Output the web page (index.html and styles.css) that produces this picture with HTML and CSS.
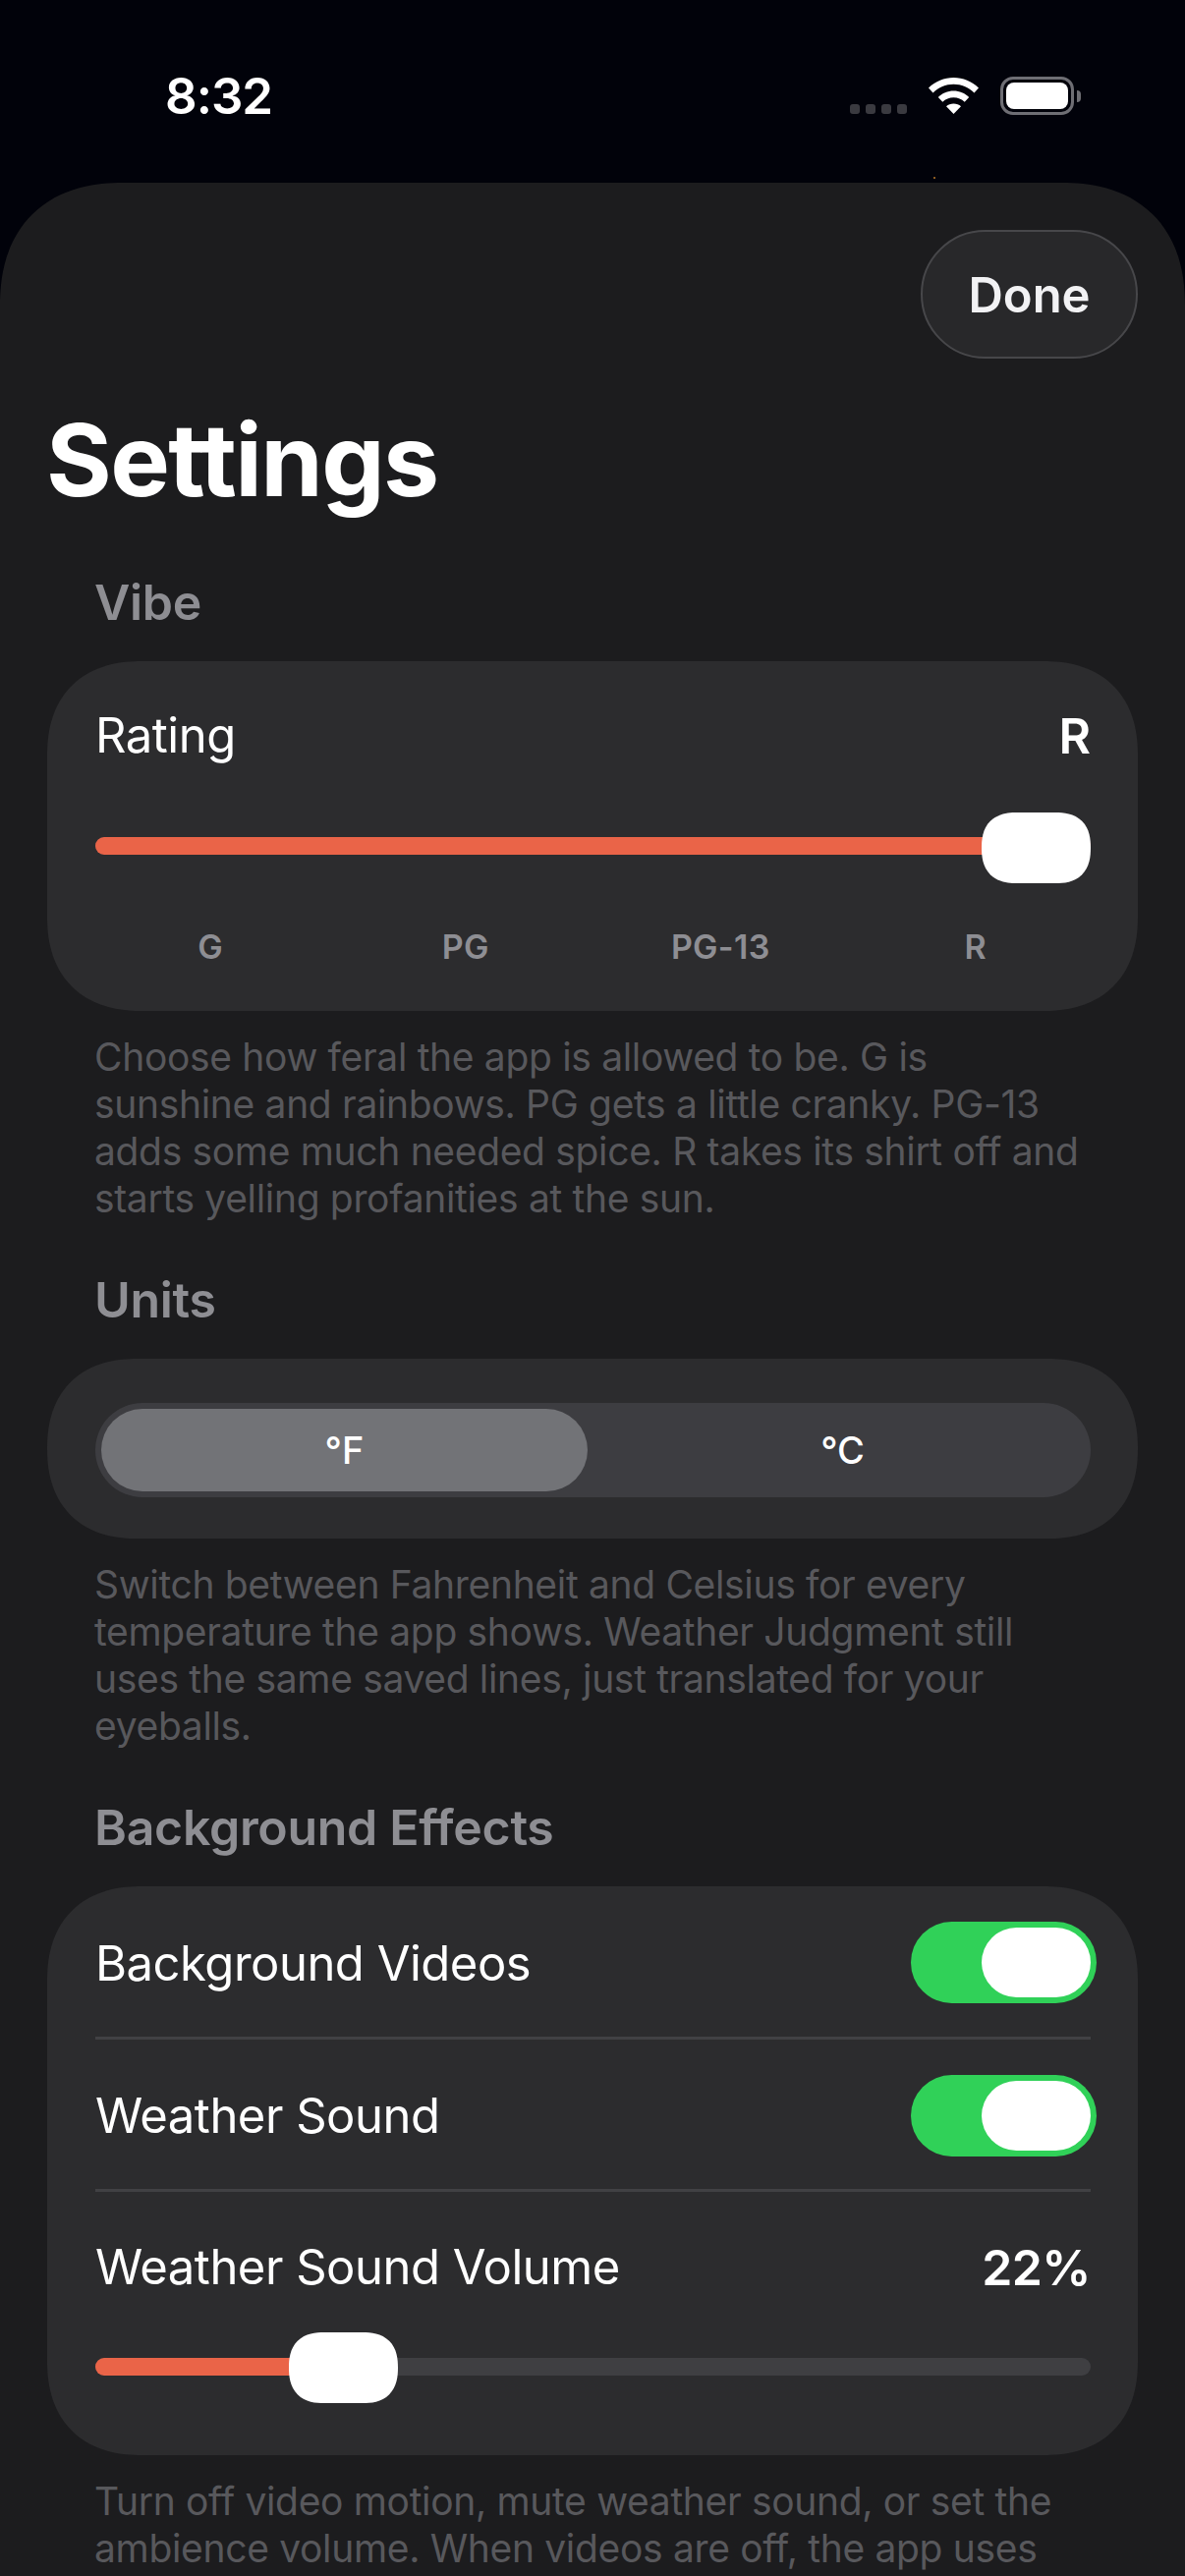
FILE: index.html
```html
<!DOCTYPE html>
<html lang="en">
<head>
<meta charset="utf-8">
<title>Settings</title>
<link rel="stylesheet" href="styles.css">
</head>
<body>
<div class="screen">
  <header class="status">
    <span class="time">8:32</span>
    <div class="status-icons">
      <div class="signal"><i></i><i></i><i></i><i></i></div>
      <svg class="wifi" viewBox="0 0 51 37" width="51" height="37" aria-hidden="true">
        <path fill="#fff" d="M25.5 0C35 0 44 3.800 51 10.500L46.500 15.500C40.800 10 33.400 6.800 25.500 6.800S10.200 10 4.500 15.500L0 10.500C7 3.800 16 0 25.500 0Z"/>
        <path fill="#fff" d="M25.500 13.500C31.500 13.500 37 15.900 41.200 19.900L36.700 24.800C33.700 22 29.800 20.300 25.500 20.300S17.300 22 14.300 24.800L9.800 19.900C14 15.900 19.500 13.500 25.500 13.500Z"/>
        <path fill="#fff" d="M25.500 26.500C28.500 26.500 31 27.500 33 29.300L25.500 37L18 29.300C20 27.500 22.500 26.500 25.500 26.500Z"/>
      </svg>
      <div class="battery"><div class="battery-fill"></div></div>
      <div class="battery-nub"></div>
    </div>
  </header>
  <i class="speck"></i>
  <main class="sheet">
    <div class="top-row"><button class="done">Done</button></div>
    <h1 class="title">Settings</h1>

    <h2 class="section-label">Vibe</h2>
    <section class="card card-rating">
      <div class="row-head"><span class="row-title">Rating</span><span class="row-value-strong">R</span></div>
      <div class="slider slider-rating">
        <div class="track-fill" style="width:100%"></div>
        <div class="thumb thumb-end"></div>
      </div>
      <div class="ticks"><span>G</span><span>PG</span><span>PG-13</span><span>R</span></div>
    </section>
    <p class="caption">Choose how feral the app is allowed to be. G is<br>sunshine and rainbows. PG gets a little cranky. PG-13<br>adds some much needed spice. R takes its shirt off and<br>starts yelling profanities at the sun.</p>

    <h2 class="section-label">Units</h2>
    <section class="card card-units">
      <div class="segmented">
        <div class="segment segment-on">°F</div>
        <div class="segment segment-off">°C</div>
      </div>
    </section>
    <p class="caption">Switch between Fahrenheit and Celsius for every<br>temperature the app shows. Weather Judgment still<br>uses the same saved lines, just translated for your<br>eyeballs.</p>

    <h2 class="section-label">Background Effects</h2>
    <section class="card card-effects">
      <div class="toggle-row">
        <span class="row-title row-title-low">Background Videos</span>
        <div class="toggle"><div class="toggle-knob"></div></div>
      </div>
      <div class="toggle-row">
        <span class="row-title row-title-low">Weather Sound</span>
        <div class="toggle"><div class="toggle-knob"></div></div>
      </div>
      <div class="volume">
        <div class="row-head"><span class="row-title">Weather Sound Volume</span><span class="row-value">22%</span></div>
        <div class="slider slider-volume">
          <div class="track-fill" style="width:22%"></div>
          <div class="thumb thumb-volume"></div>
        </div>
      </div>
    </section>
    <p class="caption">Turn off video motion, mute weather sound, or set the<br>ambience volume. When videos are off, the app uses</p>
  </main>
</div>
</body>
</html>
```
FILE: styles.css
```css
* { box-sizing: border-box; }
html, body { margin: 0; padding: 0; background: #01020a; }
body { font-family: Inter, "Liberation Sans", sans-serif; color: #fff; }
.screen { width: 1206px; height: 2622px; overflow: hidden; position: relative; background: #01020a; }

.status { height: 186px; display: flex; justify-content: space-between; padding: 78px 106px 0 168px; align-items: flex-start; }
.time { font-size: 51px; font-weight: 600; line-height: 40px; letter-spacing: -1px; }
.status-icons { display: flex; align-items: flex-start; position: relative; }
.signal { display: flex; gap: 6px; margin: 28px 22px 0 0; }
.signal i { width: 10px; height: 10px; border-radius: 3px; background: #3a3a40; display: block; }
.wifi { margin: 1px 22px 0 0; }
.battery { width: 75px; height: 39px; border: 3px solid #6e6e74; border-radius: 13px; padding: 3px; }
.battery-fill { width: 100%; height: 100%; background: #fff; border-radius: 8px; }
.battery-nub { width: 4px; height: 12px; background: #6e6e74; border-radius: 0 6px 6px 0; margin: 14px 0 0 3px; }
.speck { position: absolute; left: 950px; top: 180px; width: 2px; height: 2px; background: #8a5a20; }

.sheet { height: 2436px; background: #1c1c1e; border-radius: 125px 125px 0 0; corner-shape: superellipse(1.2); padding: 48px 48px 0; }
.top-row { display: flex; justify-content: flex-end; }
.done { width: 221px; height: 131px; padding: 2px 0 0; border-radius: 66px; background: #28282a; border: 2px solid #47474a; color: #f2f2f4; font: 600 49px Inter, "Liberation Sans", sans-serif; }
.title { margin: 41px 0 0; font-size: 102px; line-height: 124px; font-weight: 700; letter-spacing: -1.6px; text-indent: -1px; }
.section-label { margin: 0; padding-left: 48px; font-size: 50px; line-height: 58px; font-weight: 600; letter-spacing: -0.3px; color: #8e8e93; }
.title + .section-label { margin-top: 54px; }

.card { margin-top: 31px; background: #2c2c2e; border-radius: 96px; corner-shape: superellipse(1.2); padding: 0 48px 0 49px; }
.card-rating { height: 356px; padding-top: 46px; }
.row-head { display: flex; justify-content: space-between; align-items: center; height: 60px; }
.row-title { font-size: 49px; line-height: 60px; font-weight: 400; letter-spacing: -0.5px; }
.row-title-low { padding-top: 2px; }
.row-value-strong { font-size: 50px; font-weight: 600; }
.row-value { font-size: 50px; font-weight: 600; letter-spacing: -0.6px; }

.slider { position: relative; height: 18px; border-radius: 9px; background: #3f3f42; }
.slider-rating { margin-top: 73px; }
.slider-volume { margin-top: 62px; }
.track-fill { height: 100%; background: #ea6448; border-radius: 9px; }
.thumb { position: absolute; top: -26px; width: 111px; height: 72px; background: #fff; border-radius: 36px; corner-shape: superellipse(1.3); }
.thumb-end { right: 0; top: -25px; }
.thumb-volume { left: 197px; }

.ticks { display: grid; grid-template-columns: repeat(4, 1fr); gap: 25px; margin-top: 74px; font-size: 34px; line-height: 40px; font-weight: 600; letter-spacing: 0.3px; color: #8e8e93; text-align: center; }

.caption { margin: 0; padding: 23px 0 50px 48px; font-size: 39px; line-height: 48px; letter-spacing: -0.33px; color: #58585c; }

.card-units { height: 183px; padding-top: 45px; }
.segmented { height: 96px; background: #3d3d41; border-radius: 48px; padding: 6px; display: flex; }
.segment { display: flex; align-items: center; justify-content: center; font-size: 38px; font-weight: 500; border-radius: 42px; }
.segment-on { width: 495px; background: #727377; }
.segment-off { flex: 1; padding-left: 13px; }

.card-effects { height: 579px; }
.toggle-row { height: 156px; padding-top: 2px; display: flex; align-items: center; justify-content: space-between; border-bottom: 3px solid #414144; }
.toggle-row + .toggle-row { height: 155px; }
.toggle { width: 189px; height: 83px; margin-right: -6px; background: #30d158; border-radius: 42px; padding: 6px; display: flex; justify-content: flex-end; }
.toggle-knob { width: 111px; height: 71px; background: #fff; border-radius: 36px; }
.volume { padding-top: 47px; }
```
